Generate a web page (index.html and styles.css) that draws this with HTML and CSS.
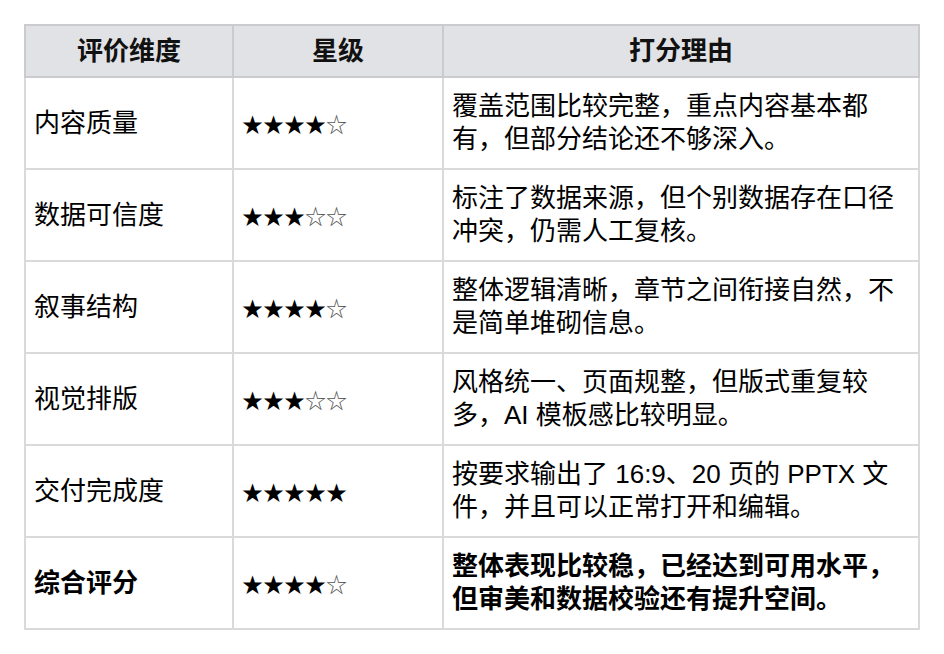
FILE: index.html
```html
<!DOCTYPE html>
<html lang="zh-CN">
<head>
<meta charset="utf-8">
<title>评分表</title>
<link rel="stylesheet" href="styles.css">
</head>
<body>
<table class="score">
  <colgroup>
    <col class="c1">
    <col class="c2">
    <col class="c3">
  </colgroup>
  <thead>
    <tr>
      <th>评价维度</th>
      <th>星级</th>
      <th>打分理由</th>
    </tr>
  </thead>
  <tbody>
    <tr>
      <td>内容质量</td>
      <td class="stars">★★★★<span class="empty">☆</span></td>
      <td>覆盖范围比较完整，重点内容基本都有，但部分结论还不够深入。</td>
    </tr>
    <tr>
      <td>数据可信度</td>
      <td class="stars">★★★<span class="empty">☆☆</span></td>
      <td>标注了数据来源，但个别数据存在口径冲突，仍需人工复核。</td>
    </tr>
    <tr>
      <td>叙事结构</td>
      <td class="stars">★★★★<span class="empty">☆</span></td>
      <td>整体逻辑清晰，章节之间衔接自然，不是简单堆砌信息。</td>
    </tr>
    <tr>
      <td>视觉排版</td>
      <td class="stars">★★★<span class="empty">☆☆</span></td>
      <td>风格统一、页面规整，但版式重复较多，AI 模板感比较明显。</td>
    </tr>
    <tr>
      <td>交付完成度</td>
      <td class="stars">★★★★★</td>
      <td>按要求输出了 16:9、20 页的 PPTX 文件，并且可以正常打开和编辑。</td>
    </tr>
    <tr class="total">
      <td class="strong">综合评分</td>
      <td class="stars">★★★★<span class="empty">☆</span></td>
      <td class="strong">整体表现比较稳，已经达到可用水平，但审美和数据校验还有提升空间。</td>
    </tr>
  </tbody>
</table>
</body>
</html>
```

FILE: styles.css
```css
html, body {
  margin: 0;
  padding: 0;
  background: #ffffff;
}

body {
  padding: 24px 0 0 24px;
  font-family: "Liberation Sans", "Noto Sans CJK SC", sans-serif;
  font-size: 26px;
  color: #000000;
}

.score {
  border-collapse: collapse;
  width: 894px;
  table-layout: fixed;
}

.c1 { width: 208px; }
.c2 { width: 210px; }
.c3 { width: 476px; }

.score th,
.score td {
  border: 2px solid #dadada;
  padding: 0 8px;
  vertical-align: middle;
  line-height: 33px;
}

.score th {
  background: #e1e2e5;
  border-color: #cbcbce;
  height: 50px;
  font-weight: 700;
  text-align: center;
  color: #111111;
}

.score td {
  height: 90px;
  text-align: left;
}

.score .stars {
  font-family: "Noto Sans CJK SC", "DejaVu Sans", sans-serif;
  font-size: 21px;
  color: #000000;
}

.score .empty {
  color: #555555;
}

.score .strong {
  font-weight: 700;
  color: #000000;
}
```
